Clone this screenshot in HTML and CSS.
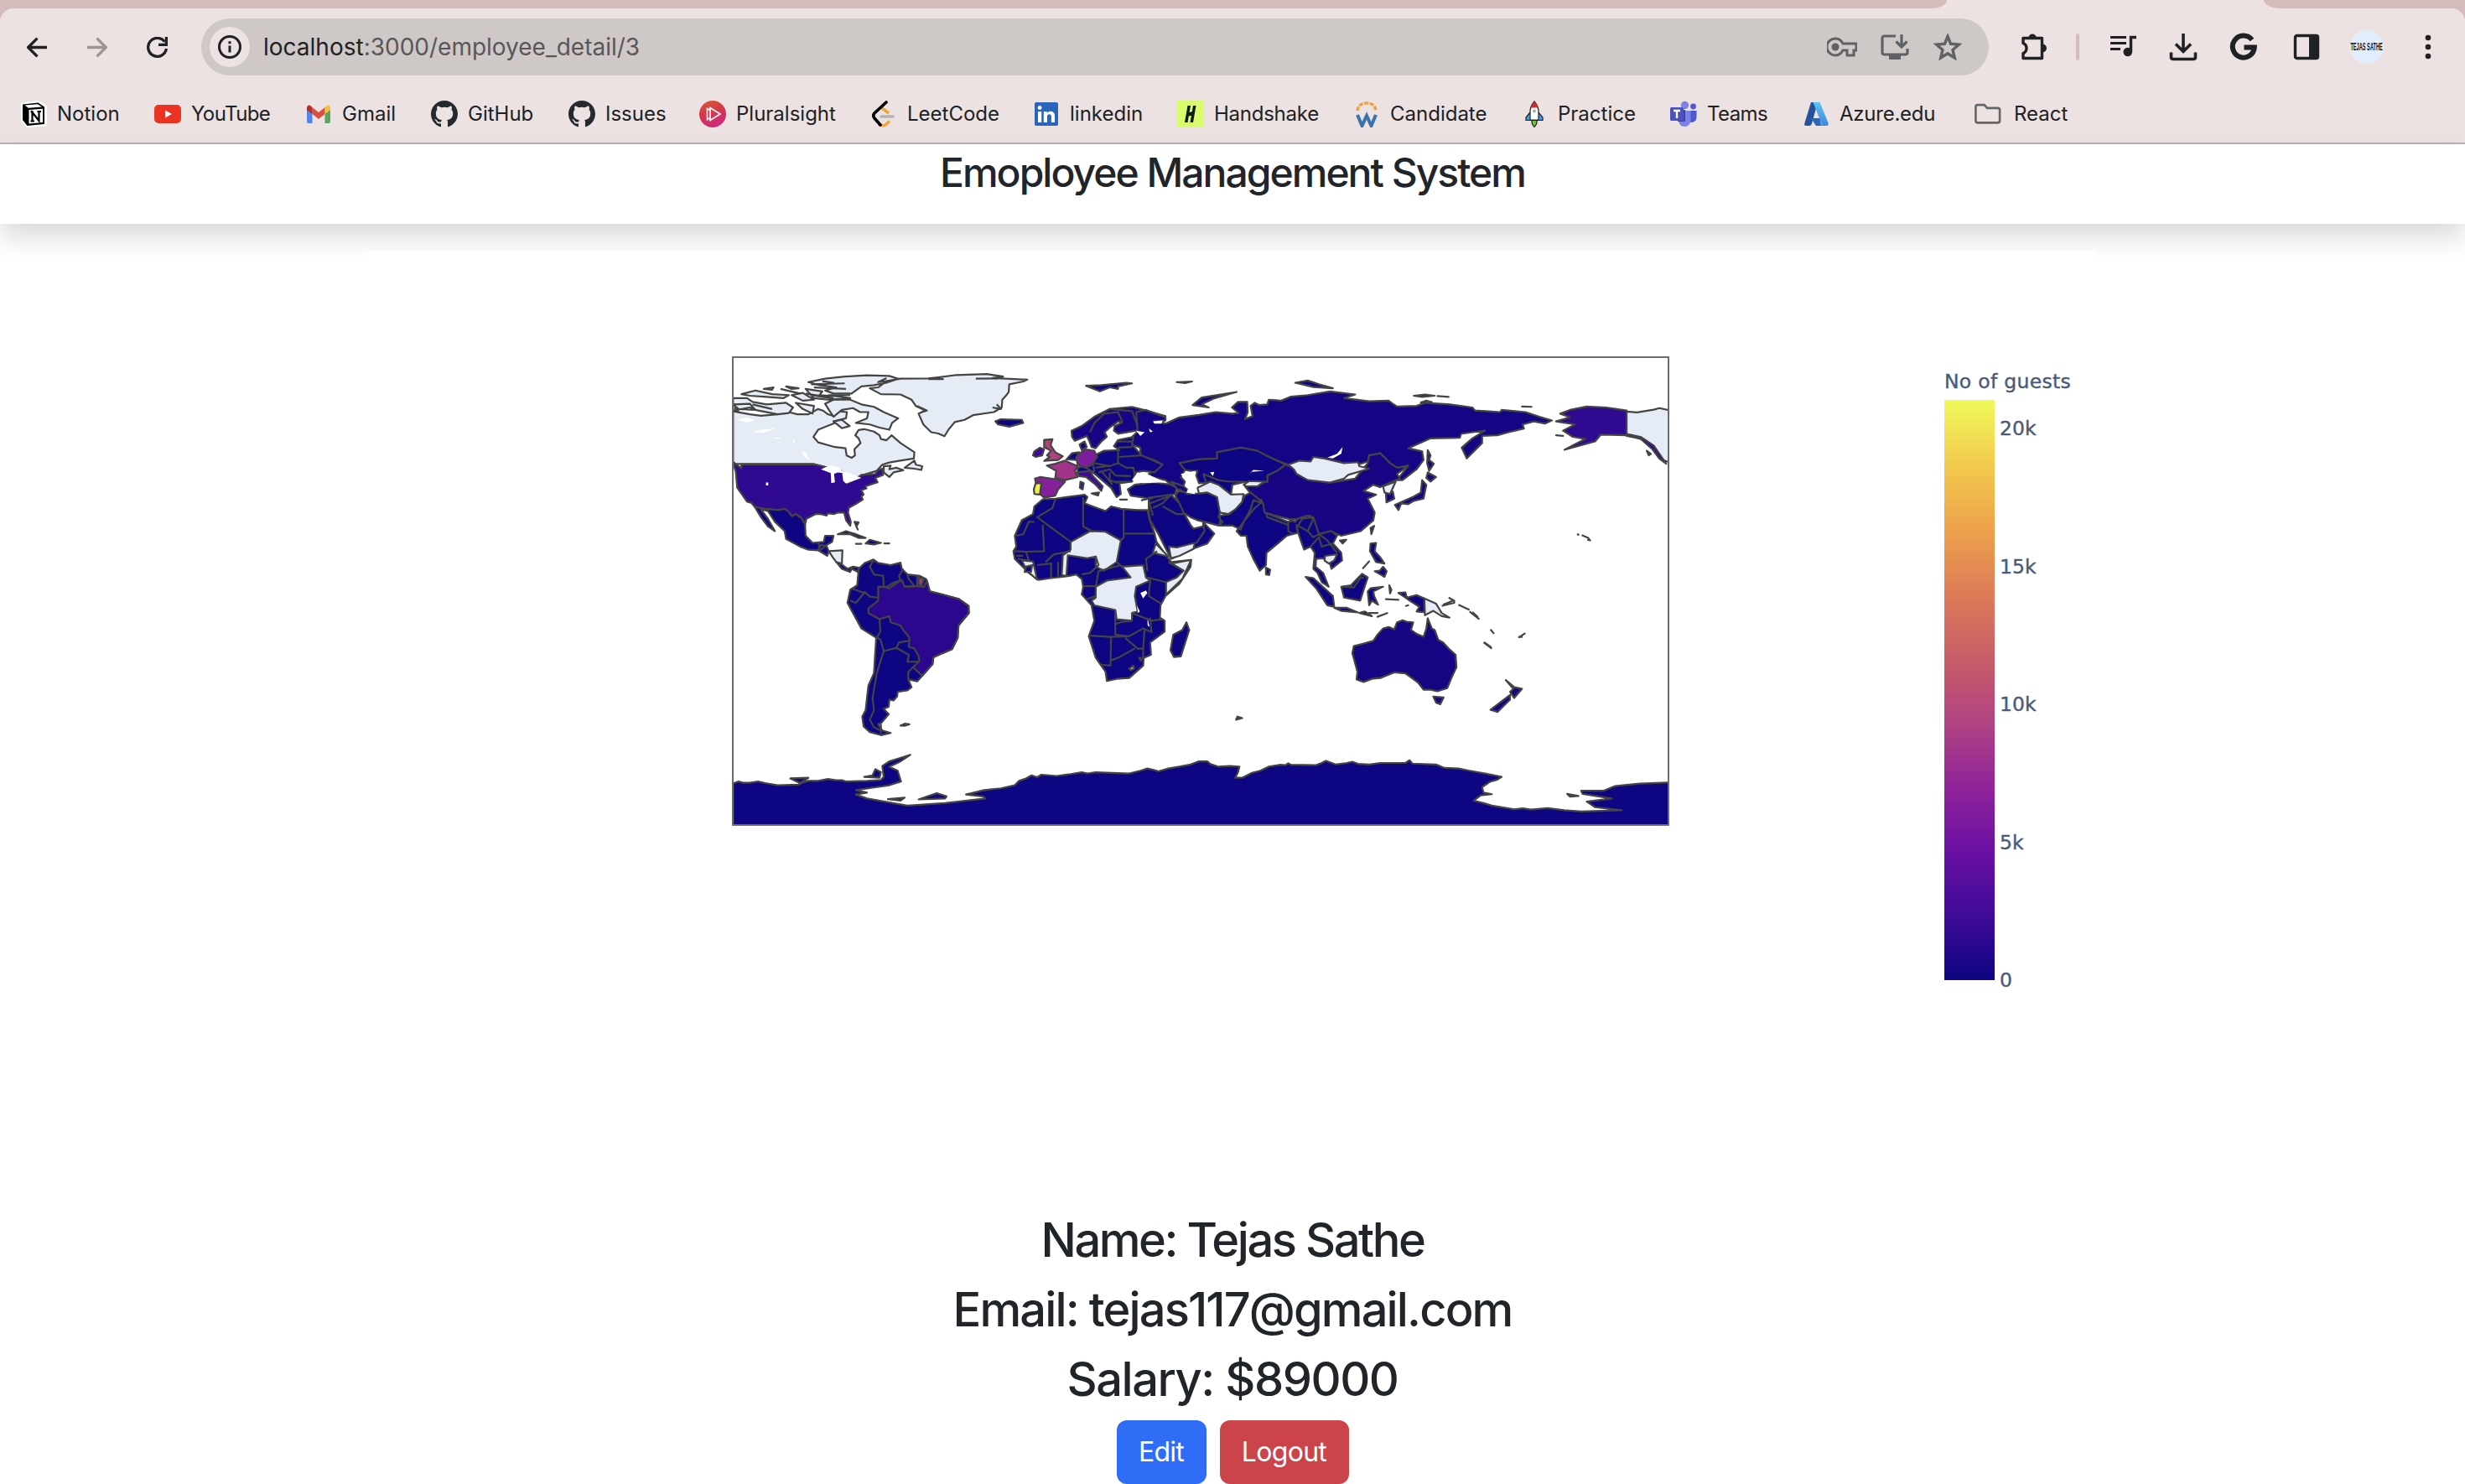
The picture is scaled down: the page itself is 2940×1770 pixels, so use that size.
FILE: index.html
```html
<!DOCTYPE html>
<html lang="en">
<head>
<meta charset="utf-8">
<title>Employee Management System</title>
<link rel="stylesheet" href="styles.css">
</head>
<body>
<div class="browser">
  <div class="tabstrip"><span class="tabs-left"></span><span class="tabs-right"></span></div>
  <div class="toolbar">
    <svg class="nav back" viewBox="0 0 24 24"><path d="M23 12H2M12 1.500 1.500 12 12 22.500"/></svg>
    <svg class="nav forward" viewBox="0 0 24 24"><path d="M1 12H22M12 1.500 22.500 12 12 22.500"/></svg>
    <svg class="nav reload" viewBox="0 0 24 24"><path d="M20.500 5.500A10.500 10.500 0 1 0 22.500 13.500M22.500 0V9H13.500"/></svg>
    <div class="omnibox">
      <span class="site"><svg viewBox="0 0 28 28"><circle cx="14" cy="14" r="12.500" fill="none" stroke="#202124" stroke-width="3"/><path d="M14 12.500V20.500M14 7.200V10.200" stroke="#202124" stroke-width="3"/></svg></span>
      <span class="url"><b>localhost</b>:3000/employee_detail/3</span>
      <svg class="oi key" viewBox="0 0 36 24"><path d="M10 2a10 10 0 1 0 9 14h5v6h8v-6h3V8H19A10 10 0 0 0 10 2Z" fill="none" stroke="#5f6264" stroke-width="3"/><circle cx="10" cy="12" r="4.500" fill="#5f6264"/></svg>
      <svg class="oi install" viewBox="0 0 34 32"><path d="M18 3H4.500Q2 3 2 5.500V22.500Q2 25 4.500 25H29.500Q32 25 32 22.500V18M25 1V15M18.500 9.500 25 16 31.500 9.500" fill="none" stroke="#5f6264" stroke-width="3.200"/><path d="M10 25H24V31H10Z" fill="#5f6264"/></svg>
      <svg class="oi star" viewBox="0 0 34 32"><path d="M17 3.500 20.600 12.300 30.500 13.100 23 19.500 25.300 29 17 23.800 8.700 29 11 19.500 3.500 13.100 13.400 12.300Z" fill="none" stroke="#5f6264" stroke-width="3.400"/></svg>
    </div>
    <svg class="ti t-ext" viewBox="0 0 34 34"><path d="M4 6.500H26.500V30.500H4V24.500Q8 23 8 18.500T4 12.500Z" fill="none" stroke="#202124" stroke-width="3.400" stroke-linejoin="round"/><path d="M10.500 6a4.600 4.600 0 0 1 9.200 0ZM27 13.500a5 5 0 0 1 0 10Z" fill="#202124"/></svg>
    <span class="divider"></span>
    <svg class="ti t-music" viewBox="0 0 34 34"><path d="M1 5.500H20M1 12.500H20M1 19.500H13" stroke="#202124" stroke-width="3.200"/><path d="M25.500 23V5.500H32" fill="none" stroke="#202124" stroke-width="3.400"/><circle cx="21.800" cy="23" r="5.300" fill="#202124"/></svg>
    <svg class="ti t-down" viewBox="0 0 34 34"><path d="M17 1V22M8 13.500 17 22.500 26 13.500M2.500 23.500V29Q2.500 31.500 5 31.500H29Q31.500 31.500 31.500 29V23.500" fill="none" stroke="#202124" stroke-width="3.600"/></svg>
    <svg class="ti t-g" viewBox="0 0 34 34"><path d="M27 8.500A13 13 0 1 0 29.800 17.500H17.500" fill="none" stroke="#202124" stroke-width="6"/></svg>
    <svg class="ti t-panel" viewBox="0 0 34 34"><rect x="3.500" y="3.500" width="27" height="27" rx="2" fill="none" stroke="#202124" stroke-width="3.400"/><path d="M20 3H31V31H20Z" fill="#202124"/></svg>
    <span class="avatar"><span>TEJAS SATHE</span></span>
    <svg class="ti t-menu" viewBox="0 0 34 34"><g fill="#202124"><circle cx="17" cy="6" r="3.300"/><circle cx="17" cy="17" r="3.300"/><circle cx="17" cy="28" r="3.300"/></g></svg>
  </div>
  <nav class="bookmarks">
    <a><svg viewBox="0 0 32 32"><path d="M2 4 22 1 31 7V29L8 31 2 24Z" fill="#fff" stroke="#fff" stroke-width="2"/><path d="M3 4.500 21.500 2.500 29 7.500V28L8.500 30 3 23Z" fill="#000"/><path d="M5.500 5.500 21 4.300 26 7.500 10 8.800ZM10.500 11 27 9.700V26L10.500 27.500Z" fill="#fff"/><path d="M14.500 24V14L22.500 24V13M12.500 13.500H16M20.500 13H25M12.500 24.500H17" stroke="#000" stroke-width="2.200" fill="none"/></svg><span>Notion</span></a>
    <a class="tight"><svg viewBox="0 0 32 32"><rect y="5" width="32" height="22" rx="5" fill="#ea3323"/><path d="M13 11.500 21 16 13 20.500Z" fill="#fff"/></svg><span>YouTube</span></a>
    <a><svg viewBox="0 0 32 32"><path d="M2 8V25Q2 27 4 27H8.500V13Z" fill="#5383ec"/><path d="M23.500 13V27H28Q30 27 30 25V8Z" fill="#58a55c"/><path d="M8.500 8 16 14 23.500 8V16L16 22 8.500 16Z" fill="#d85140"/><path d="M2 9.500Q2 5 5.500 5.500L8.500 8V16L2 11.500Z" fill="#b33225"/><path d="M30 9.500Q30 5 26.500 5.500L23.500 8V16L30 11.500Z" fill="#f1bf42"/></svg><span>Gmail</span></a>
    <a><svg viewBox="0 0 16 16"><path fill="#24292f" d="M8 0C3.580 0 0 3.580 0 8c0 3.540 2.290 6.530 5.470 7.590.4.070.55-.17.55-.38 0-.19-.01-.82-.01-1.490-2.010.37-2.530-.49-2.690-.94-.09-.23-.48-.94-.82-1.130-.28-.15-.68-.52-.01-.53.63-.01 1.080.58 1.230.82.72 1.210 1.870.87 2.330.66.07-.52.28-.87.51-1.070-1.780-.2-3.640-.89-3.640-3.950 0-.87.31-1.590.82-2.150-.08-.2-.36-1.020.08-2.120 0 0 .67-.21 2.200.82.64-.18 1.320-.27 2-.27s1.360.09 2 .27c1.530-1.040 2.200-.82 2.200-.82.44 1.100.16 1.920.08 2.120.51.56.82 1.270.82 2.150 0 3.070-1.870 3.750-3.650 3.950.29.25.54.73.54 1.480 0 1.070-.01 1.930-.01 2.200 0 .21.15.46.55.38A8.013 8.013 0 0 0 16 8c0-4.420-3.580-8-8-8z"/></svg><span>GitHub</span></a>
    <a><svg viewBox="0 0 16 16"><path fill="#24292f" d="M8 0C3.580 0 0 3.580 0 8c0 3.540 2.290 6.530 5.470 7.590.4.070.55-.17.55-.38 0-.19-.01-.82-.01-1.490-2.010.37-2.530-.49-2.690-.94-.09-.23-.48-.94-.82-1.130-.28-.15-.68-.52-.01-.53.63-.01 1.080.58 1.230.82.72 1.210 1.870.87 2.330.66.07-.52.28-.87.51-1.070-1.780-.2-3.640-.89-3.640-3.950 0-.87.31-1.590.82-2.150-.08-.2-.36-1.020.08-2.120 0 0 .67-.21 2.200.82.64-.18 1.320-.27 2-.27s1.360.09 2 .27c1.530-1.040 2.200-.82 2.200-.82.44 1.100.16 1.920.08 2.120.51.56.82 1.270.82 2.150 0 3.070-1.870 3.750-3.650 3.950.29.25.54.73.54 1.480 0 1.070-.01 1.930-.01 2.200 0 .21.15.46.55.38A8.013 8.013 0 0 0 16 8c0-4.420-3.580-8-8-8z"/></svg><span>Issues</span></a>
    <a><svg viewBox="0 0 32 32"><defs><linearGradient id="ps" x1="0" y1="0" x2="0.300" y2="1"><stop offset="0" stop-color="#dc5a33"/><stop offset=".5" stop-color="#d33847"/><stop offset="1" stop-color="#d12a7c"/></linearGradient></defs><circle cx="16" cy="16" r="16" fill="url(#ps)"/><path d="M9.500 9.500V22.500L13 20.500V11.500ZM13 8.500V23.500L25 16Z" fill="none" stroke="#fff" stroke-width="1.600"/></svg><span>Pluralsight</span></a>
    <a><svg viewBox="0 0 32 32"><path d="M14 9 22 15M10 28Q14.500 31 18 29L23 24.500" fill="none" stroke="#efa540" stroke-width="3.600"/><path d="M19 2 5 15Q2.500 18 5 21L12 29" fill="none" stroke="#000" stroke-width="3.600" stroke-linecap="round"/><path d="M13 19H27" stroke="#b3b3b3" stroke-width="3.600" stroke-linecap="round"/></svg><span>LeetCode</span></a>
    <a><svg viewBox="0 0 32 32"><rect x="2" y="2" width="28" height="28" rx="2" fill="#2a64bc"/><path d="M6 13H10.200V26H6ZM12.800 13H16.800V15Q18 12.700 21 12.700 26 12.700 26 18.500V26H21.900V19Q21.900 16.300 19.500 16.300 16.900 16.300 16.900 19.500V26H12.800Z" fill="#fff"/><circle cx="8.100" cy="8.500" r="2.400" fill="#fff"/></svg><span>linkedin</span></a>
    <a class="snug"><svg viewBox="0 0 32 32"><rect width="32" height="32" fill="#d9fb6c"/><path d="M12.500 6H16L12.500 26H9ZM19 6H22.500L19 26H15.500ZM13 14.500 20 12.500V17L12 19Z" fill="#0c1c1b"/></svg><span>Handshake</span></a>
    <a><svg viewBox="0 0 32 32"><path d="M5 12Q6 3 16 3T27 12" fill="none" stroke="#eaa140" stroke-width="3.400" stroke-dasharray="5 1.500"/><path d="M5 17 10.500 30 16 18 21.500 30 27 17" fill="none" stroke="#3a72ad" stroke-width="4"/></svg><span>Candidate</span></a>
    <a><svg viewBox="0 0 32 32"><path d="M12.500 22H19.500L18.500 28 16 31.500 13.500 28Z" fill="#6cc435" stroke="#222" stroke-width="1.200"/><path d="M11 14 6 20V23.500H26V20L21 14Z" fill="#3f9be8" stroke="#222" stroke-width="1.200"/><path d="M16 1Q21 7 21 13V23H11V13Q11 7 16 1Z" fill="#fff" stroke="#222" stroke-width="1.200"/><path d="M16 1Q19.500 5 20.300 8.500H11.700Q12.500 5 16 1Z" fill="#d12f2b"/><circle cx="16" cy="12.500" r="2" fill="#aaa"/></svg><span>Practice</span></a>
    <a class="tight"><svg viewBox="0 0 32 32"><circle cx="17.500" cy="5.500" r="4.700" fill="#7b83eb"/><circle cx="27.500" cy="7" r="3.400" fill="#5059c9"/><path d="M21 12H31.500V20Q31 26 24 26H21Z" fill="#5059c9"/><path d="M10 12H24.500V23Q24 31 17 31 10 30 10 23Z" fill="#7b83eb"/><path d="M9 11H18V25H9Z" fill="#3c44a5"/><rect y="8" width="16" height="16" rx="1.500" fill="#4b53bc"/><path d="M4 12H12M8 12V21" stroke="#fff" stroke-width="2.400"/></svg><span>Teams</span></a>
    <a class="snug"><svg viewBox="0 0 32 32"><defs><linearGradient id="az" x1="0" y1="0" x2="0" y2="1"><stop offset="0" stop-color="#5fc4ee"/><stop offset="1" stop-color="#3f87dc"/></linearGradient></defs><path d="M10 2H18L11 27Q10.500 30 7.500 30H4Q1.500 30 2.300 27Z" fill="#245399"/><path d="M10 21H21L22 30H16Z" fill="#2b66bd"/><path d="M12.500 2H20.500L30.700 27Q31 30 28.500 30H21Q23 29 22.300 27Z" fill="url(#az)"/></svg><span>Azure.edu</span></a>
    <a class="folder"><svg viewBox="0 0 34 32"><path d="M3 4.500H12.500L16 8.500H29.500Q32 8.500 32 11V24.500Q32 27 29.500 27H4Q1.500 27 1.500 24.500V7Q1.500 4.500 4 4.500" fill="none" stroke="#646668" stroke-width="2.800"/></svg><span>React</span></a>
  </nav>
</div>

<header class="app-header"><h4>Emoployee Management System</h4></header>

<main>
  <figure class="chart">
    <svg class="map" viewBox="42 30 3348 1508" preserveAspectRatio="none">
      <!-- Americas -->
      <g>
        <path class="none" d="M40,202 100,212 140,217 200,212 240,205 270,212 310,212 345,195 362,200 380,212 400,217 412,202 448,205 445,225 400,235 405,240 345,262 328,285 345,303 405,318 443,322 447,345 465,353 477,345 475,325 497,305 490,290 478,280 490,263 510,260 545,268 565,280 570,292 590,296 608,280 640,305 690,335 688,355 640,362 600,368 575,375 555,395 500,410 460,430 435,410 400,390 330,373 40,373Z"/>
        <path class="none" d="M655,385 690,362 695,375 718,380 715,392 690,388ZM580,380 605,378 600,390 625,385 650,393 615,400 600,415 580,400Z"/>
        <path class="us" d="M40,366 70,387 70,374 330,374 370,382 410,385 435,400 438,420 450,435 480,420 500,408 550,405 560,392 575,388 578,408 550,418 558,432 530,440 515,445 518,452 500,458 508,472 500,478 505,488 480,502 455,515 452,530 462,560 460,573 445,555 438,530 415,530 400,535 380,532 375,540 355,535 335,535 303,550 298,568 285,548 265,535 250,542 240,528 225,518 200,522 155,518 118,512 105,498 90,495 75,475 55,450 50,400Z"/>
        <path class="lake" d="M355,390 385,378 420,382 435,402 415,400 402,405 405,432 392,435 390,402ZM430,395 470,408 500,418 445,436 435,428ZM55,230 90,222 118,232 90,238ZM110,270 140,262 192,258 150,272ZM285,330 300,335 315,360 295,350ZM158,433H166V442H158ZM180,288 215,288 200,292ZM252,302 262,296 260,306Z"/>
        <path class="low" d="M118,512 155,518 200,522 225,518 240,528 250,542 265,535 285,548 298,568 300,605 325,628 365,625 370,605 400,605 395,625 375,635 355,650 345,652 310,650 280,640 230,615 225,590 190,560 165,525 140,520 165,550 190,590 165,575 140,545ZM345,652 355,635 375,638 383,655 378,670ZM410,690 430,698 450,712 470,705 490,708 488,722 465,712 460,722 430,712ZM415,600 445,590 480,600 515,612 490,612 460,600ZM515,630 530,618 570,628 545,633ZM582,630H600ZM480,631H500ZM475,560 490,562 482,575 487,585Z"/>
        <path class="none" d="M383,655 432,652 430,695 410,690 395,672Z"/>
        <path class="low" d="M490,712 512,693 543,682 560,693 605,700 640,692 645,712 665,730 710,735 732,745 745,785 790,795 850,810 884,832 885,855 848,895 845,935 825,972 790,985 758,998 755,1020 718,1058 700,1076 668,1070 680,1095 665,1105 630,1110 628,1125 615,1138 600,1135 598,1158 580,1165 598,1182 570,1212 560,1215 575,1235 605,1243 570,1250 530,1240 508,1222 503,1190 515,1170 520,1130 525,1090 545,1050 553,935 500,905 450,822 460,780 485,765 488,735Z"/>
        <path class="br" d="M560,770 590,770 620,755 645,748 655,770 700,768 725,770 735,750 745,785 790,795 850,810 884,832 885,855 848,895 845,935 825,972 790,985 758,998 755,1020 718,1058 685,1030 708,1010 705,995 690,970 670,965 672,935 650,910 640,895 605,885 600,865 565,875 525,855 525,840 560,815Z"/>
        <path d="M705,740 725,745 715,768 705,760Z" fill="#a53a86"/>
        <path class="line" d="M545,682 530,705 545,730 578,735 580,770 600,775 640,750 635,735 650,712M665,730 670,745 690,768 655,770M700,735V768M465,775 510,790 480,822 460,815M510,785 530,802 560,805M565,875 568,915 555,935 568,940 580,978 625,968 635,950 670,945M625,968 670,990 665,1013 705,1012M685,1030 668,1045V1070M580,978 555,1050 540,1130 545,1170 530,1200 545,1225 570,1235M570,1215V1245M345,625 350,640 345,652"/>
        <path class="none" d="M530,128 560,125 590,105 640,97 740,96 780,92 840,85 950,82 1008,90 970,95 1095,100 1080,106 1030,115 1028,140 1018,152 1005,165 1003,190 975,205 900,215 870,230 835,237 812,262 798,283 775,274 750,270 722,245 705,210 730,200 695,185 680,165 640,148 570,147ZM310,108 370,97 440,90 520,86 600,88 632,97 590,110 545,118 500,122 465,145 400,145 370,135 410,125 350,118ZM370,178 400,165 460,165 500,180 545,188 580,205 632,225 610,240 600,262 565,255 530,245 480,240 520,225 525,205 495,205 470,192 430,198 400,220 385,200ZM40,160 90,160 110,172 160,180 230,175 255,190 240,208 200,212 130,200 100,190 40,200ZM70,147 120,135 180,147 240,150 220,160 150,155 100,152ZM150,130 185,125 180,133ZM230,122 275,128 250,130ZM250,150 290,143 330,165 290,168ZM265,175 330,185 325,210 290,195ZM300,130 360,138 350,150 430,155 460,160 380,165 330,160ZM40,180 100,178 120,198 60,195ZM400,235 430,230 458,250 430,257ZM110,180 180,195M210,130 280,145"/>
        <path class="line" d="M320,115 440,112M330,125 445,130M360,105 400,110 360,118M380,150 460,150M300,145 400,160M320,150 420,165M590,95 560,108 610,103M910,97 990,96M700,185 735,200 715,205M970,190 1000,195 985,180M60,205 45,190M740,98 795,98"/>
        <path class="low" d="M980,235 1000,228 1075,230 1080,240 1030,252 990,245ZM640,1219 655,1213 672,1215 655,1220Z"/>
        <path class="low" d="M40,1406 60,1400 75,1404 100,1404 130,1400 155,1405 200,1412 275,1410 290,1403 310,1398 345,1398 380,1392 410,1396 430,1396 445,1400 520,1398 570,1395 580,1385 575,1350 600,1335 635,1325 675,1314 640,1335 600,1352 630,1365 642,1400 600,1412 540,1420 480,1428 520,1436 480,1442 520,1455 600,1468 665,1478 800,1470 945,1455 935,1448 875,1442 940,1428 1000,1422 1050,1412 1065,1398 1090,1390 1110,1380 1130,1386 1145,1378 1200,1382 1250,1376 1290,1370 1310,1374 1340,1370 1400,1372 1460,1374 1500,1365 1525,1358 1545,1362 1565,1367 1600,1358 1640,1352 1680,1345 1710,1335 1740,1335 1750,1343 1780,1352 1820,1350 1855,1352 1850,1370 1840,1388 1865,1388 1900,1372 1930,1365 1960,1352 2000,1346 2020,1347 2030,1341 2040,1346 2130,1347 2150,1340 2165,1333 2180,1338 2200,1345 2240,1340 2260,1336 2280,1343 2320,1345 2360,1340 2450,1340 2465,1331 2475,1342 2560,1345 2590,1356 2640,1358 2680,1365 2740,1375 2795,1385 2780,1394 2755,1400 2725,1418 2730,1436 2760,1441 2720,1445 2695,1462 2730,1470 2760,1478 2840,1490 2870,1487 2900,1491 2960,1486 3020,1493 3080,1497 3225,1493 3130,1483 3100,1465 3190,1455 3085,1440 3080,1430 3160,1430 3200,1415 3290,1407 3400,1403V1545H40ZM510,1385 540,1380 550,1360 570,1370 565,1388ZM245,1390 310,1388 280,1405ZM705,1458 770,1438 805,1448 800,1455ZM595,1457 655,1452 640,1462ZM3030,1440 3070,1447 3040,1449Z"/>
      </g>
      <!-- Europe, Africa and Asia -->
      <g transform="translate(990)">
        <path class="no" d="M263,265 300,250 345,220 400,195 480,188 530,200 600,218 595,235 545,228 555,245 495,265 430,275 415,265 418,250 445,238 430,235 400,255 382,270 390,285 370,300 350,322 335,318 325,295 318,282 275,298 265,285Z"/>
        <path class="ru" d="M495,205 530,198 600,222 600,232 560,235 600,242 650,222 720,214 780,205 840,210 862,208 838,190 860,172 893,172 895,205 885,228 912,218 905,185 920,175 935,182 965,180 970,165 1015,168 1050,155 1110,150 1190,138 1280,148 1240,160 1330,170 1400,168 1415,178 1430,187 1500,185 1530,175 1620,180 1700,190 1710,200 1800,205 1805,198 1890,205 1940,220 1985,232 1960,242 1920,235 1880,245 1885,258 1830,270 1790,280 1735,282 1735,305 1680,355 1662,320 1700,290 1745,265 1700,270 1660,275 1655,288 1550,290 1470,322 1520,332 1525,360 1500,390 1450,425 1430,425 1470,378 1430,385 1405,370 1370,338 1330,345 1325,365 1290,375 1220,368 1150,352 1120,365 1040,375 1000,362 960,345 900,325 870,320 830,328 785,335 785,355 720,358 650,370 670,392 655,415 670,430 660,455 620,440 600,425 550,415 540,405 590,375 560,360 510,345 510,320 480,310 480,285 500,268Z"/>
        <path class="cn" d="M1030,375 1000,395 965,410 965,430 885,445 915,480 945,490 955,530 1060,555 1120,540 1130,560 1150,600 1190,590 1230,605 1300,590 1345,555 1350,530 1325,485 1355,472 1310,460 1345,440 1370,448 1400,435 1440,420 1430,405 1470,378 1430,385 1405,370 1370,338 1330,345 1325,370 1280,420 1190,433 1100,420 1060,385ZM1225,620 1248,618 1235,630Z"/>
        <path class="none" d="M1040,375 1080,362 1120,365 1130,350 1170,355 1240,370 1290,367 1295,380 1330,388 1255,408 1240,420 1190,433 1110,425 1070,405 1060,390Z"/>
        <path class="low" d="M650,370 720,358 785,355 785,335 870,320 930,330 960,345 1030,375 1000,395 965,410 965,430 930,430 880,432 840,440 835,472 800,460 770,432 720,435 710,410 715,395 690,395 670,392ZM635,475 650,455 680,470 720,468 750,465 785,478 795,530 790,545 805,560 790,572 740,560 715,555 690,545 665,530 650,500ZM795,540 830,535 870,500 885,475 905,465 945,495 915,520 880,560 870,585 840,572 795,572ZM880,560 905,520 915,490 950,500 955,530 1040,560 1090,545 1110,540 1130,550 1110,590 1070,570 1075,595 1035,605 1000,632 962,660 960,700 938,718 915,680 895,640 890,605 870,605 855,590ZM960,708 975,715 972,732 960,730ZM1070,580 1090,550 1130,545 1150,600 1195,590 1215,605 1200,630 1230,660 1233,685 1195,712 1188,690 1165,678 1140,680 1138,705 1165,725 1185,770 1160,755 1145,725 1130,712 1135,660 1120,640 1097,650 1085,620ZM465,455 490,440 560,432 620,440 640,450 635,470 560,480 545,485 475,475ZM540,482 620,472 650,500 665,530 690,570 700,582 735,575 735,560 750,575 775,598 750,630 705,645 620,680 600,645 575,600 545,555 540,530ZM620,430 665,445 690,465 650,462Z"/>
        <path class="low" d="M345,345 380,330 435,328 415,315 430,295 485,285 480,310 515,345 590,375 560,400 520,395 495,400 480,430 435,435 440,470 425,480 405,450 340,400 315,385 340,372ZM292,310 310,300 318,318 300,328ZM437,488H462ZM515,490 540,485ZM255,348 265,338 290,335 280,360 245,358ZM285,385 340,372 345,395 285,405Z"/>
        <path class="none" d="M715,450 760,430 790,440 835,472 880,470 875,495 850,520 825,535 795,530 785,480 750,465 720,468ZM880,440 900,428 955,430 930,445 890,445ZM612,640 640,643 705,628 700,648 650,670 620,678ZM1172,670 1215,665 1205,685 1185,695 1170,685ZM1045,552H1072L1065,560Z"/>
        <path class="lake" d="M480,425 500,400 540,408 600,432 520,435ZM655,405 710,395 690,412 710,440 705,470 675,465 685,445ZM495,265 525,270 510,282ZM540,258 555,268 545,270ZM760,400 775,398 770,412ZM900,405 915,392 955,395 910,398ZM1180,352 1215,340 1235,318 1230,340 1200,355ZM555,235 590,232 585,242 560,242Z"/>
        <path d="M165,295 195,293 188,312 205,335 232,348 215,360 165,363 185,350 175,345 190,330 165,318Z" fill="#b0427d"/>
        <path d="M125,345 130,332 150,320 165,325 158,345 135,350ZM285,400 330,395 340,412 375,445 370,460 350,440 315,415 290,412ZM335,468 362,465 358,475ZM295,430 307,435 303,455 293,450Z" fill="#3f0a94"/>
        <path d="M175,378 205,372 240,362 285,380 275,395 285,415 240,425 205,418 208,395Z" fill="#a13489"/>
        <path d="M132,420 150,415 205,422 240,430 215,455 205,475 165,482 150,470 155,435 135,432Z" fill="#83209a"/>
        <path d="M135,435 155,435 150,472 130,470 128,455Z" fill="#f0f04a"/>
        <path d="M280,350 310,325 345,330 355,350 335,375 315,385 285,375Z" fill="#7d1c9c"/>
        <path class="line" d="M330,270 345,240 380,210 430,205 445,235M400,195 480,202 500,250M430,330 430,370 400,380 345,370M435,350 515,345M430,370 460,385 485,385 490,410M350,385 400,378M360,400 400,390 420,410 475,412M400,400 400,425 430,435M370,395 410,440M420,430 470,430M430,320 480,318M430,300 480,300M620,472 590,500 555,515M545,500 620,475M590,510 640,535 665,535M540,490 555,540M735,560 740,590 710,630M960,530 965,545 1040,570M735,405 745,430M735,405 790,425 830,430 880,430M1040,560 1040,590 1060,600M1110,590 1130,610 1150,600M1120,640 1150,610 1160,640 1200,630M1150,600 1180,620 1215,660"/>
        <path class="low" d="M160,487 205,485 310,472 320,480 310,500 345,512 385,525 405,510 440,518 500,522 535,522 545,560 560,595 568,625 600,665 620,690 692,683 690,705 650,760 600,800 582,830 580,870 597,880 597,915 545,950 548,990 522,1000 520,1025 470,1065 425,1068 390,1075 385,1045 350,1000 325,930 345,880 335,830 300,795 305,770 300,745 280,730 255,735 190,742 145,748 110,725 60,680 55,655 65,640 60,605 85,555 125,535 130,510Z"/>
        <path class="none" d="M260,625 330,590 385,592 440,620 425,690 380,718 350,705 350,672 320,678 250,668 245,735 228,733 232,668 260,650ZM445,705 520,700 530,740 545,750 495,770 490,800 500,850 480,855 480,880 425,875 420,845 345,830 335,815 350,805 350,770 390,750 475,740ZM622,695 692,683 660,745 602,795 602,755 640,740 665,718ZM565,630 610,672 555,660ZM85,685 125,688 140,747 105,720ZM470,1035 485,1025 488,1035 475,1040ZM505,1000 515,1000 512,1010Z"/>
        <path class="lake" d="M510,790 530,782 535,790 520,808ZM497,830 508,850 502,855ZM535,868 543,900 536,895Z"/>
        <path class="low" d="M100,705 122,700 118,722 95,722Z"/>
        <path class="line" d="M205,487 195,515 140,545 260,625M160,570 165,655 100,657M305,480 305,575 340,592M450,520V612L440,618M450,598H560M130,560 110,560 90,600 65,605M60,655 100,657 110,685 70,680M170,690 200,665 260,655M140,700 190,695V742M215,690V735M350,672 360,700 330,725 300,730M350,770 360,720 440,700M425,690 445,705M535,720 530,680 570,655M610,690 665,718M535,740 602,755M330,928 400,932 470,930M405,932 403,1025 370,1022M405,1008 430,1000 490,970M455,935 500,970H520M420,845V925L470,930M480,880 440,885 420,890M480,855 550,880 590,875M545,750 540,800 585,825M470,930 520,905 545,915M525,905 520,970 520,1000M305,768H350L350,800 320,810M65,670H90M545,870 550,920"/>
        <path class="low" d="M675,885 685,910 655,995 630,997 618,975 628,925 660,910ZM315,120 370,118 460,110 480,112 430,122 430,130 400,125 365,138ZM640,108 695,106 670,111ZM697,182 730,158 855,140 770,162 730,180 755,190ZM1065,110 1110,103 1150,115 1200,128 1130,124ZM853,1200 858,1190 875,1195Z"/>
      </g>
      <!-- East Asia, Oceania and Alaska -->
      <g transform="translate(2040)">
        <path class="ru" d="M440,152 480,148 515,152 470,156ZM525,153 565,156ZM465,174 485,168 505,173ZM828,187 862,188ZM490,328 500,345 495,360 512,372 495,395 488,370Z"/>
        <path class="us" d="M1203,200 1130,190 1060,187 1000,198 965,210 1000,222 950,235 1018,245 975,265 1010,285 1055,292 980,327 1090,300 1110,278 1203,280Z"/>
        <path class="none" d="M1203,203 1240,206 1300,197 1320,192 1360,200V368L1325,358 1300,320 1260,292 1203,282Z"/>
        <path class="us" d="M1203,276 1255,286 1300,313 1345,372 1320,355 1295,325 1255,293ZM1275,330 1290,340 1282,345ZM950,280 975,282Z"/>
        <path class="ru" d="M485,418 490,400 520,415 500,430ZM470,425 485,440 475,485 440,492 420,503 395,500 385,522 372,505 440,478 465,465ZM340,468 365,462 370,485 342,497Z"/>
        <path class="none" d="M330,445 375,430 355,470 335,465Z"/>
        <path class="low" d="M285,580 298,573 288,600ZM285,630 305,628 300,655 320,675 335,695 305,690 283,655ZM300,720 318,718 330,705 343,720 335,738 320,730ZM258,710 280,688ZM180,770 215,765 255,728 275,740 262,775 248,815 190,805ZM275,785 285,775 330,770 295,785 298,800 312,828 290,815 280,830ZM52,738 80,742 150,800 155,835 130,830 90,775ZM155,838 200,838 240,853 180,848ZM245,855 265,850 290,865ZM280,855 310,855ZM310,867 345,855ZM352,765 360,780 355,792ZM340,810 385,812ZM385,790 410,788 415,805 450,797 478,808 478,852 450,850 460,835 425,815 405,802ZM412,832 420,830Z"/>
        <path class="none" d="M478,808 520,825 540,855 568,870 540,865 510,848 480,862Z"/>
        <path class="line" d="M185,770 225,772 250,740 262,742M540,832 585,822 585,815 565,805M545,828 580,815M600,828 640,845M640,850 675,875M650,852 670,868M715,908 728,922M690,950 720,970M693,950 718,966M815,935 840,920M815,932 830,932M1025,600 1033,602M1042,603 1065,612 1072,620 1062,618"/>
        <path class="au" d="M220,985 225,962 255,955 295,945 310,925 330,905 350,900 370,908 380,885 400,878 415,883 438,885 430,910 450,922 475,932 485,905 490,872 505,905 515,910 528,942 545,950 565,970 590,990 593,1030 575,1065 560,1098 525,1108 500,1103 475,1103 455,1080 440,1070 410,1050 370,1047 320,1065 290,1068 260,1078 235,1070 238,1045ZM510,1125 547,1128 535,1150 520,1145ZM770,1072 800,1095 828,1100 800,1130 785,1110 797,1100ZM785,1120 785,1135 740,1175 715,1168Z"/>
      </g>
    </svg>
    <div class="legend">
      <div class="legend-title">No of guests</div>
      <div class="scale">
        <div class="bar"></div>
        <ol><li>20k</li><li>15k</li><li>10k</li><li>5k</li><li>0</li></ol>
      </div>
    </div>
  </figure>
  <section class="details">
    <h3 class="name">Name: Tejas Sathe</h3>
    <h3 class="email">Email: tejas117@gmail.com</h3>
    <h3 class="salary">Salary: $89000</h3>
    <div class="actions"><button class="btn edit">Edit</button><button class="btn logout">Logout</button></div>
  </section>
</main>
</body>
</html>
```
FILE: styles.css
```css
* { box-sizing: border-box; }
body { margin: 0; height: 1770px; overflow: hidden; background: #fff; color: #212529; font-family: Inter, "Liberation Sans", sans-serif; }
h3, h4, figure, ol { margin: 0; padding: 0; font-weight: 500; }
svg { display: block; flex: none; }

.browser { height: 172px; background: linear-gradient(#d4bcbc 30px, #ebe2e1 30px); border-bottom: 2px solid #b9b2b3; }
.tabstrip { display: flex; justify-content: space-between; height: 10px; background: #ebe2e1; }
.tabs-left, .tabs-right { background: #d4bcbc; }
.tabs-left { width: 2322px; border-bottom-right-radius: 18px 10px; }
.tabs-right { width: 240px; border-bottom-left-radius: 20px 10px; }

.toolbar { display: flex; align-items: center; height: 92px; padding-left: 32px; background: #ebe2e1; border-radius: 16px 16px 0 0; }
.nav { width: 25px; height: 25px; fill: none; stroke: #202124; stroke-width: 3.2; }
.forward { margin-left: 46px; stroke: #9a9595; }
.reload { margin-left: 47px; }
.omnibox { display: flex; align-items: center; width: 2132px; height: 68px; margin-left: 40px; padding: 0 32px 0 10px; border-radius: 34px; background: #cec8c7; }
.site { display: grid; place-items: center; width: 48px; height: 48px; border-radius: 50%; background: #ebe2e1; }
.site svg { width: 28px; height: 28px; }
.url { margin-left: 16px; margin-right: auto; font-size: 28px; color: #5a5658; white-space: nowrap; }
.url b { font-weight: 400; color: #202124; }
.key { width: 36px; height: 24px; }
.install { width: 34px; height: 32px; margin-left: 28px; }
.star { width: 34px; height: 32px; margin-left: 29px; }
.ti { width: 34px; height: 34px; }
.t-ext { margin-left: 37px; }
.divider { width: 4px; height: 32px; margin-left: 33px; border-radius: 2px; background: #d4bcbc; }
.t-music { margin-left: 36px; }
.t-down { margin-left: 37px; }
.t-g { margin-left: 38px; }
.t-panel { margin-left: 41px; }
.avatar { display: flex; flex: none; align-items: center; justify-content: center; width: 40px; height: 40px; margin-left: 35px; border-radius: 50%; background: #e2eefb; font: 700 12.5px "Liberation Sans", sans-serif; white-space: nowrap; color: #111; }
.avatar span { flex: none; transform: scaleX(.45); }
.t-menu { margin-left: 36px; }

.bookmarks { display: grid; grid-template-columns: 160px 180px 150px 164px 156px 204px 194px 172px 210px 200px 178px 158px 205px 120px; align-items: center; height: 68px; padding-left: 24px; }
.bookmarks a { display: flex; align-items: center; gap: 12px; font-size: 24px; color: #202124; white-space: nowrap; }
.bookmarks a span { padding-bottom: 2px; }
.bookmarks .tight { letter-spacing: -.6px; }
.bookmarks .snug { letter-spacing: -.25px; }
.bookmarks .folder { gap: 15px; }
.bookmarks svg { width: 32px; height: 32px; }

.app-header { height: 95px; padding-top: 5px; background: #fff; box-shadow: 0 16px 32px rgba(0, 0, 0, .15); text-align: center; }
.app-header h4 { font-size: 48px; line-height: 57.6px; letter-spacing: -1.98px; }

.chart { position: relative; display: flex; width: 2062px; height: 1147px; margin: 32px auto 0; padding-left: 434px; padding-top: 126px; background: #fff; }
.map { width: 1118px; height: 560px; border: 2px solid #6b6b6b; }
.map path { stroke: #444; stroke-width: 2.2px; vector-effect: non-scaling-stroke; stroke-linejoin: round; }
.map .none { fill: #e5ecf6; }
.map .low { fill: #0d0582; }
.map .us { fill: #2f0990; }
.map .br { fill: #2b078d; }
.map .ru { fill: #140585; }
.map .no { fill: #180586; }
.map .cn { fill: #180584; }
.map .au { fill: #150583; }
.map .lake { fill: #fff; stroke: none; }
.map .line { fill: none; }

.legend { margin-left: 328px; padding-top: 16px; font-family: "DejaVu Sans", sans-serif; font-size: 23.5px; line-height: 28px; color: #4a5b7a; -webkit-text-stroke: .4px #4a5b7a; }
.legend-title { white-space: nowrap; height: 36px; letter-spacing: .29px; }
.scale { display: flex; gap: 6px; }
.bar { width: 60px; height: 692px; background: linear-gradient(to top, #0d0582, #3f0a98 11.1%, #6a10a3 22.2%, #90249a 33.3%, #b04381 44.4%, #c95d69 55.5%, #dd7c58 66.6%, #eda24b 77.7%, #f3ca4e 88.8%, #f0f95b); }
.scale ol { display: flex; flex-direction: column; justify-content: space-between; height: 686px; margin-top: 20px; list-style: none; }

.details { text-align: center; }
.details h3 { font-size: 56px; line-height: 67.2px; margin-bottom: 16px; }
.details .name { letter-spacing: -2.44px; }
.details .email { letter-spacing: -1.87px; }
.details .salary { letter-spacing: -1.48px; margin-bottom: 14px; }
.actions { display: flex; justify-content: center; gap: 16px; }
.btn { height: 76px; padding: 0; border: 0; border-radius: 12px; font: 400 32px Inter, sans-serif; color: #fff; letter-spacing: -.7px; }
.edit { width: 107px; background: #2f6df6; }
.logout { width: 154px; background: #ca444a; }
```
